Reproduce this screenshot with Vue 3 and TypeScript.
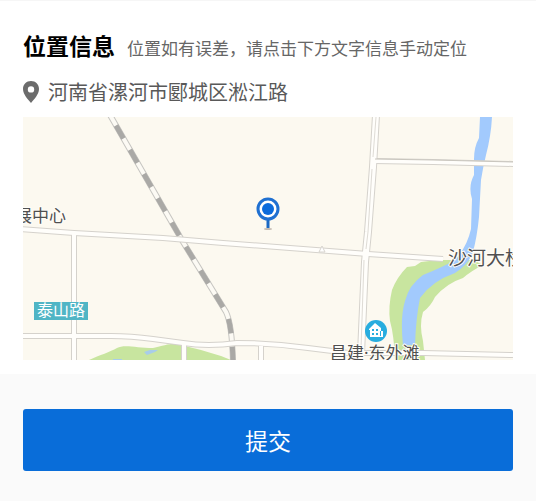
<script setup lang="ts">
import { ref } from 'vue'

interface Road {
  id: string
  d: string
}

const address = ref('河南省漯河市郾城区淞江路')

const roads: Road[] = [
  { id: 'south', d: 'M0 219H88Q108 219 130 222L160 226Q185 230 214 226Q250 226 285 231L325 236H400L490 238' },
  { id: 'southwest-ave', d: 'M51 117V245' },
  { id: 'park-lane', d: 'M161 226V245' },
  { id: 'short-lane', d: 'M238 229V245' },
  { id: 'northeast', d: 'M351 44L410 45L492 47' },
  { id: 'main', d: 'M-2 112L51 116L140 121L200 126L280 132L345 137L420 142' },
]

const avenue = 'M353 -2L350 50L345 115L342 145L338 237'

function submit(): void {
  address.value = address.value.trim()
}
</script>

<template>
  <form class="page" @submit.prevent="submit">
    <section class="card">
      <header class="head">
        <h1 class="title">位置信息</h1>
        <p class="hint">位置如有误差，请点击下方文字信息手动定位</p>
      </header>

      <a class="address" href="#map">
        <svg class="pin" viewBox="0 0 16 22" aria-hidden="true">
          <path
            fill-rule="evenodd"
            d="M8 0C3.4 0 0 3.5 0 8c0 5.300 5 10.500 8 14 3-3.500 8-8.700 8-14 0-4.500-3.400-8-8-8Zm0 5.200a3.200 3.200 0 1 1 0 6.400 3.200 3.200 0 0 1 0-6.400Z"
          />
        </svg>
        <span>{{ address }}</span>
      </a>

      <svg id="map" class="map" viewBox="0 0 490 243" preserveAspectRatio="xMidYMid slice">
        <rect width="490" height="243" fill="#fcf9f0" />

        <path
          fill="#c8e59f"
          d="M66 243C77 238 87 235 94 231C101 227 114 231 130 231C140 229 148 226 153 227L162 229L178 233L198 239L208 243Z"
        />
        <path fill="#a8cdea" d="M121 235l6-2 8 0-3 2-8 3zM90 242l9 0v1h-9z" />
        <path
          fill="#c8e59f"
          d="M450 143L415 143L398 145L392 149L384 150Q374 160 369 173Q365 190 367 204Q371 218 372 243H402L400 224Q396 208 400 195Q408 189 412 180Q424 166 440 161Q448 154 460 148Z"
        />
        <path
          fill="#a2cafd"
          d="M457 0H469Q468 19 463 38Q460 50 458 63L456 100Q454 120 450 135Q445 148 432 156Q409 164 397 181Q393 200 392 228H380Q377 200 382 184Q386 168 400 158Q420 150 432 143Q444 130 448 112L449 82Q445 69 451 58L451 42Q451 30 456 21Z"
        />

        <g fill="none">
          <path d="M87 -2L160 125L203 195Q209 207 210 245" stroke="#c6c5c1" stroke-width="6" />
          <path d="M87 -2L160 125L203 195Q209 207 210 245" stroke="#fcfaf4" stroke-width="4" />
          <path
            d="M87 -2L160 125L203 195Q209 207 210 245"
            stroke="#aaa9a6"
            stroke-width="5"
            stroke-dasharray="15 13"
            stroke-dashoffset="-12"
          />
          <path :d="avenue" stroke="#d5d2cc" stroke-width="8" />
          <path v-for="road in roads" :key="road.id + '-edge'" :d="road.d" stroke="#d5d2cc" stroke-width="6" />
          <path :d="avenue" stroke="#fffefb" stroke-width="6" />
          <path v-for="road in roads" :key="road.id" :d="road.d" stroke="#fffefb" stroke-width="4" />
          <path d="M353 0L350 40M349 52L345 115L343 132M341 143L338 232" stroke="#dedbd5" />
          <path d="M352 42L410 43L490 45" stroke="#c9c6be" />
        </g>
        <path d="M299 129l3 6h-6z" fill="#fff" stroke="#d8d5cf" />

        <rect x="11" y="185" width="54" height="18" fill="#50b5c5" />
        <text class="label road-name" x="14" y="199">泰山路</text>

        <g class="label place">
          <text x="-8" y="105">展中心</text>
          <text class="large" x="425" y="148">沙河大桥</text>
          <text x="307" y="242">昌建·东外滩</text>
        </g>

        <circle cx="353" cy="214" r="11" fill="#28addf" />
        <path
          fill="#fff"
          fill-rule="evenodd"
          d="M346 212L352 206L358 211V214H360V220H347V213H346ZM349 212V214H351V212ZM353 212V214H355V212ZM349 216V218H351V216ZM353 216V218H355V216ZM357 214V219H358V214Z"
        />

        <ellipse cx="245" cy="112" rx="4" ry="1" fill="#c2b9b0" />
        <path d="M245 101V111" stroke="#1b68c3" stroke-width="3" />
        <circle cx="245" cy="92" r="10" fill="#fff" stroke="#1f70d1" stroke-width="3" />
        <circle cx="245" cy="92" r="6" fill="#0b6bdc" />
      </svg>
    </section>

    <footer class="actions">
      <button class="submit" type="submit">提交</button>
    </footer>
  </form>
</template>

<style>
body {
  background: #fafafa;
}
</style>

<style scoped>
.page {
  font-family: "Noto Sans CJK SC", sans-serif;
  background: #fafafa;
}

.card {
  padding: 30px 23px 14px;
  border-top: 1px solid #f6f6f6;
  background: #fff;
}

.head {
  display: flex;
  align-items: baseline;
  gap: 12px;
  line-height: 28px;
}

.title {
  margin: 0;
  font-size: 23px;
  font-weight: 700;
  color: #000;
  white-space: nowrap;
}

.hint {
  margin: 0;
  font-size: 17px;
  color: #666;
}

.address {
  display: flex;
  align-items: center;
  gap: 9px;
  margin: 16px 0 11px;
  font-size: 20px;
  line-height: 28px;
  color: #595959;
  text-decoration: none;
}

.pin {
  width: 16px;
  height: 22px;
  fill: #6c6c6c;
}

.map {
  display: block;
  width: 100%;
  overflow: hidden;
}

.label {
  font-size: 17px;
}

.place {
  font-family: "Noto Sans", "Noto Sans CJK SC", sans-serif;
  fill: #505050;
  stroke: #fffdf8;
  stroke-width: 2px;
  paint-order: stroke;
}

.large {
  font-size: 19px;
}

.road-name {
  font-size: 16px;
  fill: #fff;
}

.actions {
  padding: 35px 23px 29px;
}

.submit {
  display: block;
  width: 100%;
  padding: 15px;
  border: 0;
  border-radius: 3px;
  background: #096dd9;
  color: #fff;
  font-family: inherit;
  font-size: 23px;
  line-height: 32px;
  cursor: pointer;
}
</style>
